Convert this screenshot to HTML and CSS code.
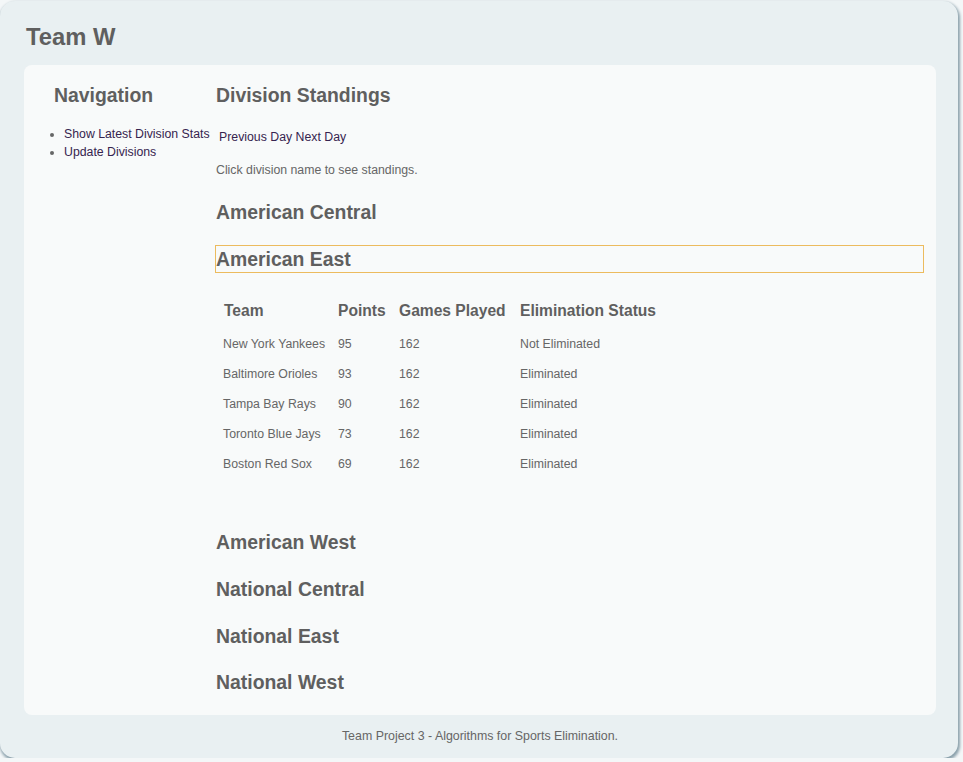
FILE: index.html
```html
<!DOCTYPE html>
<html>
<head>
<meta charset="utf-8">
<title>Team W</title>
<link rel="stylesheet" href="styles.css">
</head>
<body>
<div class="page">
  <h1 class="site-title">Team W</h1>
  <div class="panel">
    <div class="nav-col">
      <h2 class="col-title nav-title">Navigation</h2>
      <ul class="nav-list">
        <li><a href="#">Show Latest Division Stats</a></li>
        <li><a href="#">Update Divisions</a></li>
      </ul>
    </div>
    <div class="main-col">
      <h2 class="col-title">Division Standings</h2>
      <p class="day-links"><a href="#">Previous Day</a> <a href="#">Next Day</a></p>
      <p class="hint">Click division name to see standings.</p>
      <h3 class="division">American Central</h3>
      <h3 class="division active">American East</h3>
      <table class="standings">
        <thead>
          <tr>
            <th class="c-team">Team</th>
            <th class="c-pts">Points</th>
            <th class="c-gp">Games Played</th>
            <th class="c-elim">Elimination Status</th>
          </tr>
        </thead>
        <tbody>
          <tr><td>New York Yankees</td><td>95</td><td>162</td><td>Not Eliminated</td></tr>
          <tr><td>Baltimore Orioles</td><td>93</td><td>162</td><td>Eliminated</td></tr>
          <tr><td>Tampa Bay Rays</td><td>90</td><td>162</td><td>Eliminated</td></tr>
          <tr><td>Toronto Blue Jays</td><td>73</td><td>162</td><td>Eliminated</td></tr>
          <tr><td>Boston Red Sox</td><td>69</td><td>162</td><td>Eliminated</td></tr>
        </tbody>
      </table>
      <h3 class="division">American West</h3>
      <h3 class="division">National Central</h3>
      <h3 class="division">National East</h3>
      <h3 class="division last">National West</h3>
    </div>
  </div>
  <div class="footer">Team Project 3 - Algorithms for Sports Elimination.</div>
</div>
</body>
</html>
```

FILE: styles.css
```css
html, body {
  margin: 0;
  padding: 0;
}

body {
  background: #f4f7f8;
  font-family: "Liberation Sans", Arial, sans-serif;
  color: #666;
  font-size: 12.3px;
}

.page {
  width: 958px;
  height: 757px;
  box-sizing: border-box;
  margin-top: 1px;
  background: #e9f0f2;
  border-radius: 15px;
  box-shadow: 1px 2px 3px 1px #8aa0ab;
  padding: 22px 22px 0 24px;
}

.site-title {
  margin: 0 0 14px 2px;
  font-size: 23.8px;
  line-height: 28px;
  font-weight: bold;
  color: #5f5f5f;
}

.panel {
  display: flex;
  background: #f8fafa;
  border-radius: 8px;
  height: 650px;
  box-sizing: border-box;
  padding-top: 18px;
}

.nav-col {
  width: 192px;
  flex: none;
}

.col-title {
  margin: 0;
  font-size: 19.4px;
  line-height: 24px;
  font-weight: bold;
  color: #5f5f5f;
}

.nav-title {
  padding-left: 30px;
}

.nav-list {
  margin: 18px 0 0 0;
  padding-left: 40px;
  line-height: 18px;
  font-size: 12.3px;
  color: #666;
}

a {
  color: #36244f;
  text-decoration: none;
}

.main-col {
  flex: 1;
  padding-right: 12px;
}

.day-links {
  margin: 22px 0 0 0;
  padding-left: 3px;
  line-height: 16px;
}

.hint {
  margin: 17px 0 0 0;
  line-height: 16px;
  color: #666;
}

.division {
  margin: 0 0 19px -1px;
  font-size: 19.4px;
  line-height: 26px;
  font-weight: bold;
  color: #5f5f5f;
  border: 1px solid transparent;
}

.hint + .division {
  margin-top: 20px;
}

.division.active {
  border-color: #ecbb5e;
}

.division.last {
  margin-top: -1px;
}

.standings {
  border-collapse: collapse;
  margin: 0 0 49px 0;
  color: #666;
}

.standings th {
  text-align: left;
  font-size: 15.6px;
  font-weight: bold;
  line-height: 20px;
  padding: 9px 0 8px 7px;
  color: #5f5f5f;
}

.standings th.c-team {
  padding-left: 8px;
}

.standings td {
  font-size: 12.3px;
  line-height: 16px;
  padding: 7px 0 7px 7px;
}

.c-team { width: 107px; }
.c-pts { width: 54px; }
.c-gp { width: 114px; }

.footer {
  text-align: center;
  padding-top: 13px;
  line-height: 16px;
  font-size: 12.4px;
  color: #666;
}
```
